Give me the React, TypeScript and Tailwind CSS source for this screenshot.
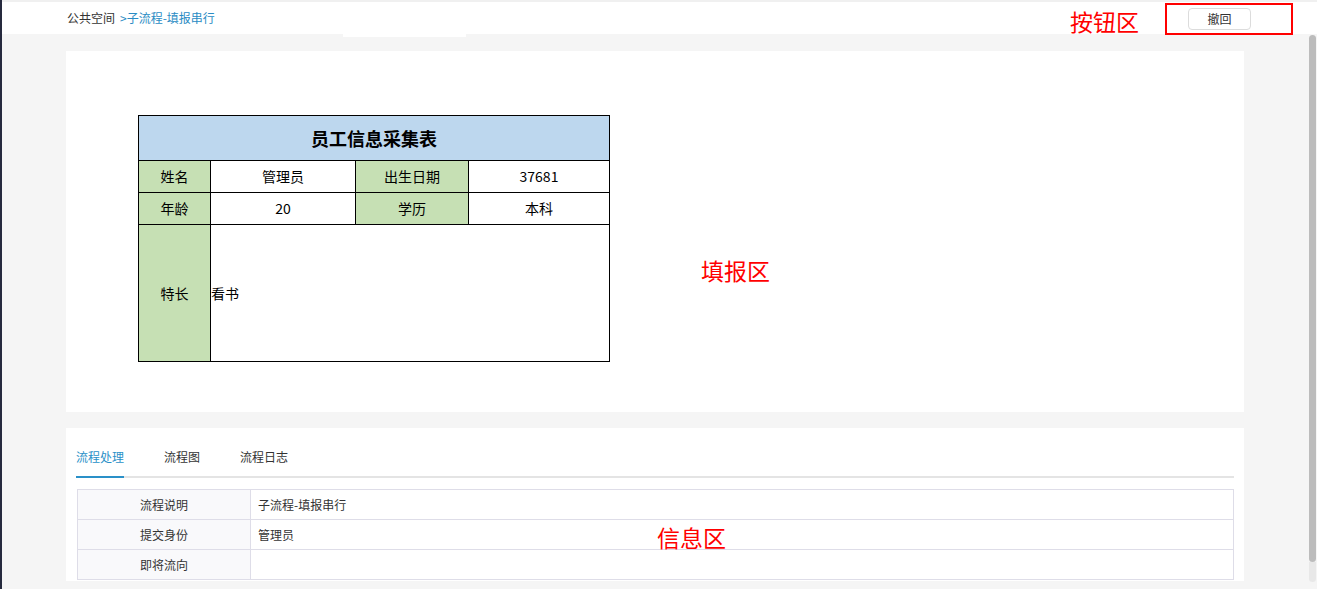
import React from "react";

const font = { fontFamily: '"Noto Sans CJK SC", "Noto Sans", sans-serif' };

function Header() {
  return (
    <div className="relative flex h-[32px] items-center bg-white pl-[65px]">
      <span className="text-[12px] text-[#333]">公共空间</span>
      <span className="ml-[5px] text-[12px] text-[#2a8cc4]">&gt;子流程-填报串行</span>

      {/* annotation: button area */}
      <span className="absolute left-[1068px] top-[4px] text-[23px] leading-[30px] text-[#ff0000]">
        按钮区
      </span>
      <div className="absolute left-[1163px] top-[1px] flex h-[32px] w-[128px] items-center border-2 border-[#ff0000] pl-[21px]">
        <button className="h-[22px] w-[63px] rounded-[4px] border border-[#dcdcdc] bg-white text-[12px] text-[#333]">
          撤回
        </button>
      </div>

      <div className="absolute left-[341px] top-[32px] h-[3px] w-[123px] bg-white" />
    </div>
  );
}

function FormTable() {
  const label = "border border-black bg-[#c6e0b4] text-center";
  const cell = "border border-black bg-white text-center";
  return (
    <table className="border-collapse text-[14px] text-black" style={{ width: 472 }}>
      <tbody>
        <tr className="h-[45px]">
          <td colSpan={4} className="border border-black bg-[#bdd7ee] text-center text-[18px] font-bold">
            员工信息采集表
          </td>
        </tr>
        <tr className="h-[32px]">
          <td className={`${label} w-[72px]`}>姓名</td>
          <td className={`${cell} w-[145px]`}>管理员</td>
          <td className={`${label} w-[113px]`}>出生日期</td>
          <td className={cell}>37681</td>
        </tr>
        <tr className="h-[32px]">
          <td className={label}>年龄</td>
          <td className={cell}>20</td>
          <td className={label}>学历</td>
          <td className={cell}>本科</td>
        </tr>
        <tr className="h-[137px]">
          <td className={label}>特长</td>
          <td colSpan={3} className="border border-black bg-white text-left">
            看书
          </td>
        </tr>
      </tbody>
    </table>
  );
}

function InfoPanel() {
  const rows = [
    ["流程说明", "子流程-填报串行"],
    ["提交身份", "管理员"],
    ["即将流向", ""],
  ];
  return (
    <div className="relative mt-[16px] bg-white px-[10px] pb-px">
      <div className="flex h-[50px] items-end border-b-2 border-[#e4e4e4] text-[12px]">
        <div className="-mb-[2px] border-b-2 border-[#2a90c8] pb-[10px] text-[#2a90c8]">流程处理</div>
        <div className="ml-[40px] pb-[10px] text-[#333]">流程图</div>
        <div className="ml-[40px] pb-[10px] text-[#333]">流程日志</div>
      </div>
      <table className="ml-px mt-[11px] w-[1157px] border-collapse text-[12px] text-[#333]">
        <tbody>
          {rows.map(([k, v]) => (
            <tr key={k} className="h-[30px]">
              <td className="w-[173px] border border-[#dedde8] bg-[#f9f9fb] text-center">{k}</td>
              <td className="border border-[#dedde8] pl-[7px]">{v}</td>
            </tr>
          ))}
        </tbody>
      </table>
      <span className="absolute left-[591px] top-[94px] text-[23px] leading-[30px] text-[#ff0000]">
        信息区
      </span>
    </div>
  );
}

export default function App() {
  return (
    <div className="flex h-[589px] w-[1317px] overflow-hidden bg-[#f5f5f5]" style={font}>
      <div className="w-[2px] shrink-0 bg-[#262a3e]" />
      <div className="flex min-w-0 flex-1 flex-col">
        <div className="h-[2px] bg-[#f0f0f0]" />
        <Header />
        <div className="flex flex-1">
          <div className="flex-1 px-[64px] pt-[17px]">
            <div className="relative h-[361px] bg-white pl-[72px] pt-[64px]">
              <FormTable />
              <span className="absolute left-[635px] top-[204px] text-[23px] leading-[30px] text-[#ff0000]">
                填报区
              </span>
            </div>
            <InfoPanel />
          </div>
          {/* scrollbar */}
          <div className="flex w-[10px] shrink-0 flex-col pt-px">
            <div className="ml-[1px] h-[527px] w-[7px] rounded-full bg-[#bcbcbc]" />
            <div className="ml-[1px] h-[20px] w-[7px] rounded-b-full bg-[#e8e8e8]" />
          </div>
        </div>
      </div>
    </div>
  );
}
